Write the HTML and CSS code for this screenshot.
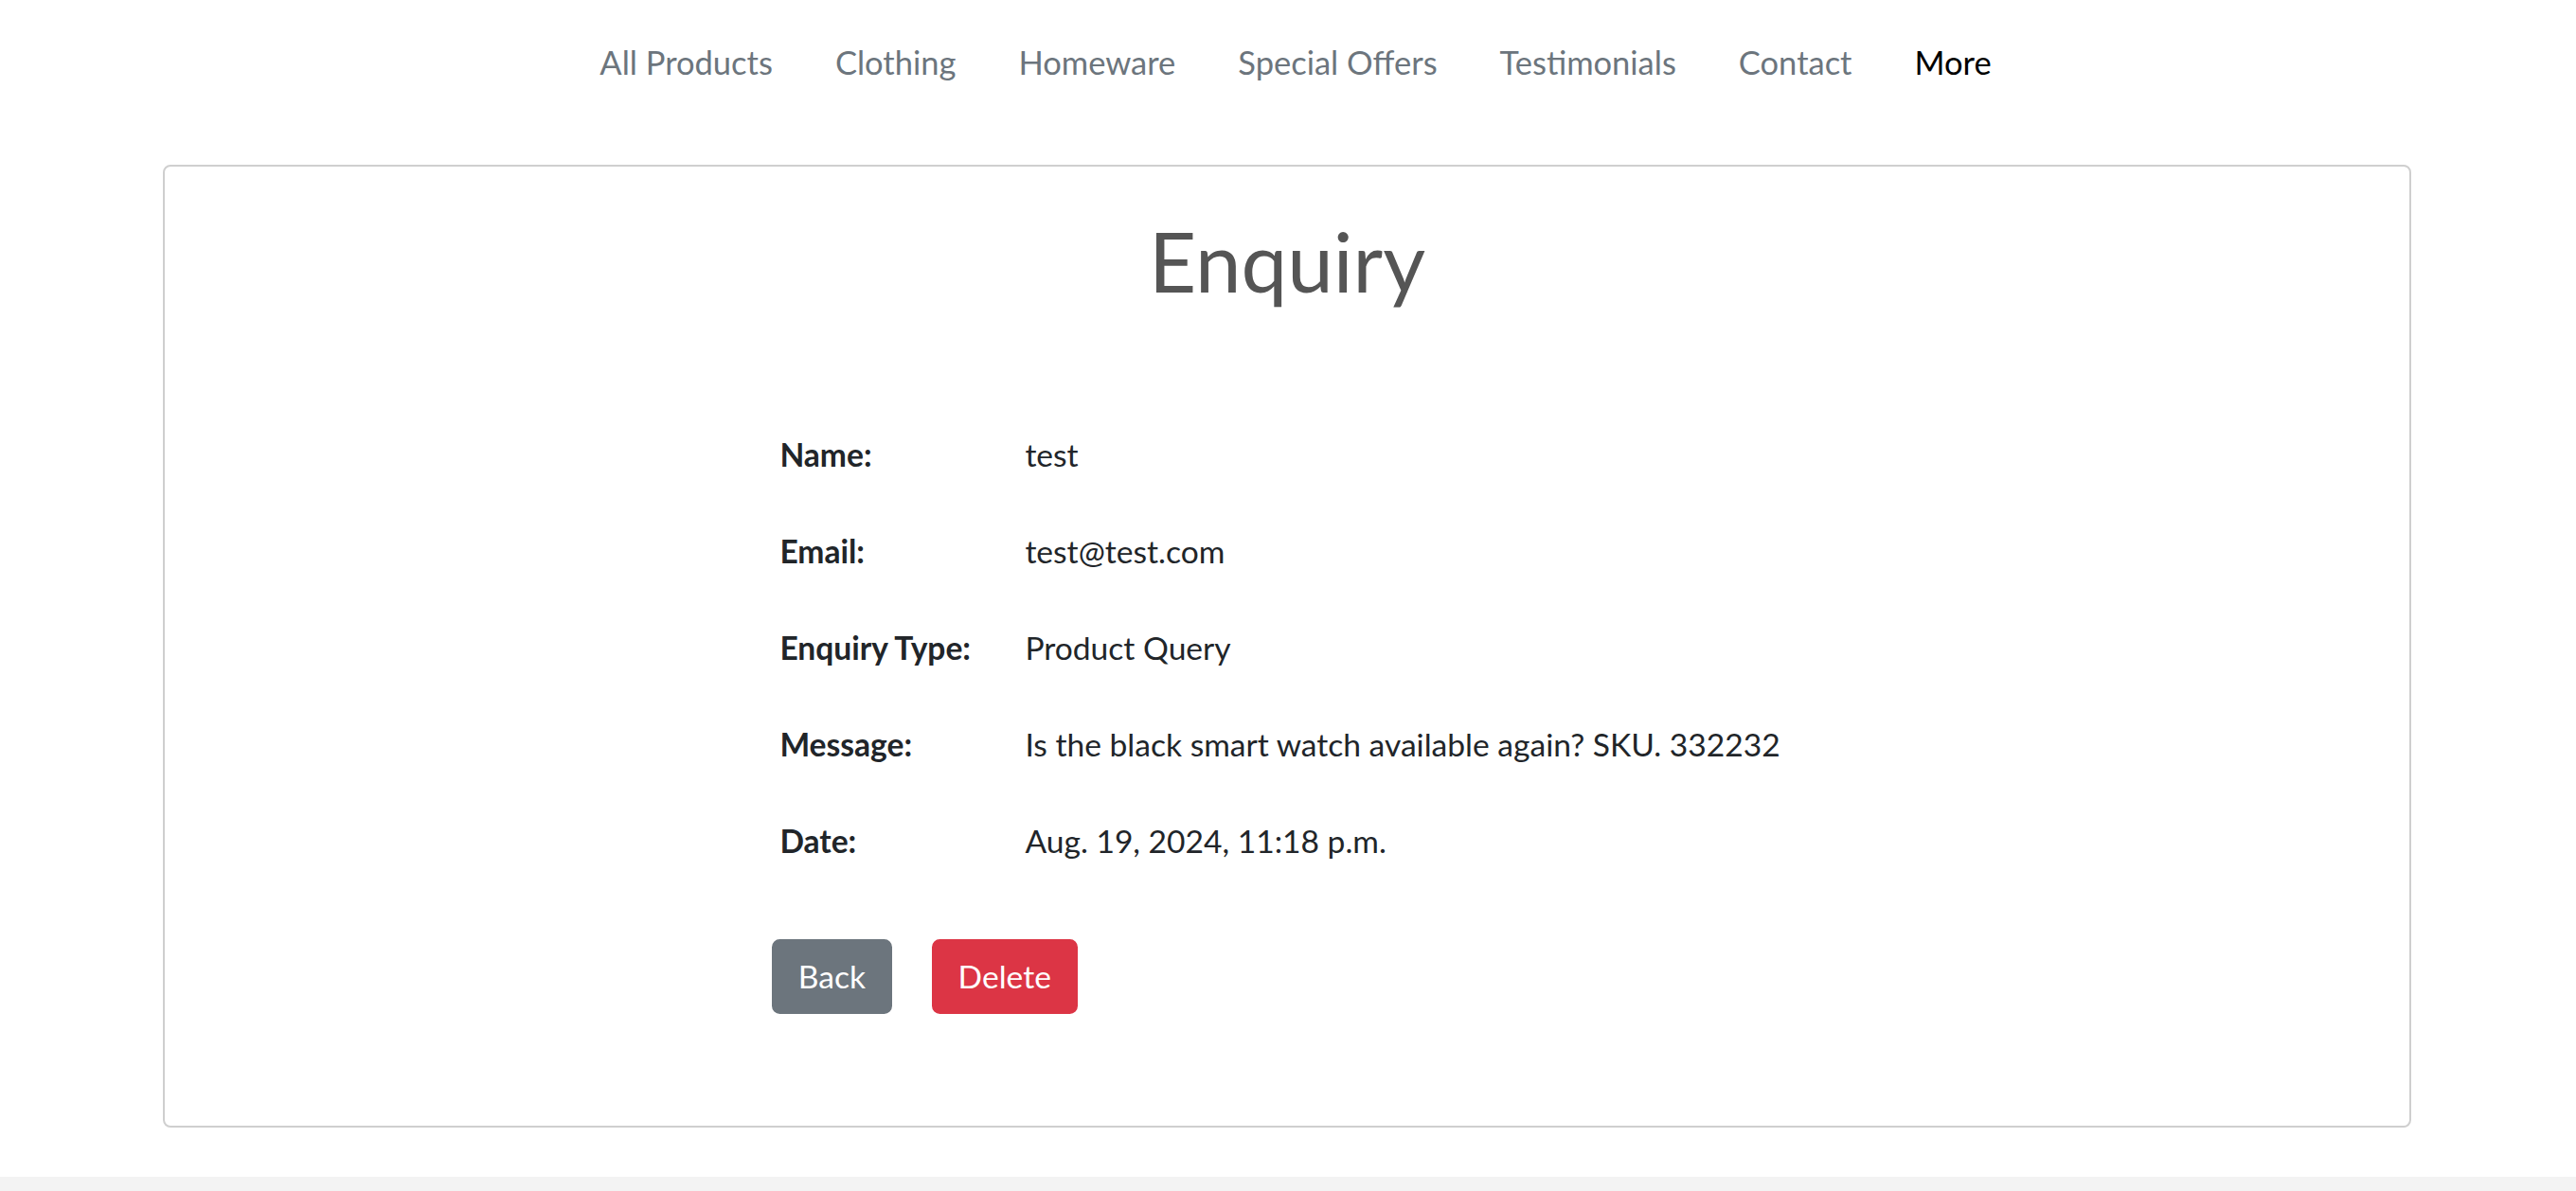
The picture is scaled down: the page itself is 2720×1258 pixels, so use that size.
FILE: index.html
```html
<!DOCTYPE html>
<html lang="en">
<head>
<meta charset="utf-8">
<title>Enquiry</title>
<link rel="stylesheet" href="styles.css">
</head>
<body>
<nav class="topnav">
  <ul class="nav-list">
    <li><a class="nav-link" href="#">All Products</a></li>
    <li><a class="nav-link" href="#">Clothing</a></li>
    <li><a class="nav-link" href="#">Homeware</a></li>
    <li><a class="nav-link" href="#">Special Offers</a></li>
    <li><a class="nav-link" href="#">Testimonials</a></li>
    <li><a class="nav-link" href="#">Contact</a></li>
    <li><a class="nav-link nav-link-more" href="#">More</a></li>
  </ul>
</nav>
<main class="page">
  <section class="card">
    <h1 class="card-title">Enquiry</h1>
    <div class="details">
      <dl class="detail-grid">
        <dt class="detail-label">Name:</dt><dd class="detail-value">test</dd>
        <dt class="detail-label">Email:</dt><dd class="detail-value">test@test.com</dd>
        <dt class="detail-label">Enquiry Type:</dt><dd class="detail-value">Product Query</dd>
        <dt class="detail-label">Message:</dt><dd class="detail-value">Is the black smart watch available again? SKU. 332232</dd>
        <dt class="detail-label">Date:</dt><dd class="detail-value">Aug. 19, 2024, 11:18 p.m.</dd>
      </dl>
      <div class="actions">
        <a class="btn btn-back" href="#">Back</a>
        <a class="btn btn-delete" href="#">Delete</a>
      </div>
    </div>
  </section>
</main>
<footer class="site-footer"></footer>
</body>
</html>
```
FILE: styles.css
```css
html, body {
  margin: 0;
  padding: 0;
  background: #ffffff;
}

body {
  font-family: Lato, "Open Sans", sans-serif;
  color: #212529;
  font-size: 33.6px;
}

/* ---------- top navigation ---------- */
.topnav {
  padding: 45px 0 88px 16px;
}

.nav-list {
  list-style: none;
  margin: 0;
  padding: 0;
  display: flex;
  justify-content: center;
  gap: 66px;
  font-size: 34.5px;
  line-height: 41.4px;
}

.nav-link {
  color: #6c757d;
  text-decoration: none;
}

.nav-link-more {
  color: #000000;
}

/* ---------- card ---------- */
.page {
  padding: 0 174px 0 172px;
}

.card {
  border: 2px solid #cfcfcf;
  border-radius: 8px;
  padding: 48px 0 118px;
  background: #ffffff;
}

.card-title {
  margin: 0 0 126.6px;
  text-align: center;
  font-weight: 400;
  font-size: 87px;
  line-height: 1.2;
  color: #555555;
}

.details {
  max-width: 1088px;
  margin: 0 auto;
}

.detail-grid {
  display: grid;
  grid-template-columns: 259px 1fr;
  row-gap: 51.6px;
  margin: 0;
  padding-left: 8.4px;
  line-height: 50.4px;
}

.detail-label {
  font-weight: 700;
  color: #212529;
}

.detail-value {
  margin: 0;
  color: #212529;
}

/* ---------- buttons ---------- */
.actions {
  display: flex;
  gap: 42px;
  margin-top: 78px;
}

.btn {
  display: inline-block;
  padding: 12.6px 25.8px;
  border: 2.1px solid transparent;
  border-radius: 8.4px;
  font-size: 33.6px;
  line-height: 50.4px;
  color: #ffffff;
  text-decoration: none;
}

.btn-back {
  background: #6c757d;
  border-color: #6c757d;
}

.btn-delete {
  background: #dc3545;
  border-color: #dc3545;
}

/* ---------- footer ---------- */
.site-footer {
  margin-top: 52px;
  height: 15px;
  background: #f3f3f3;
}
```
